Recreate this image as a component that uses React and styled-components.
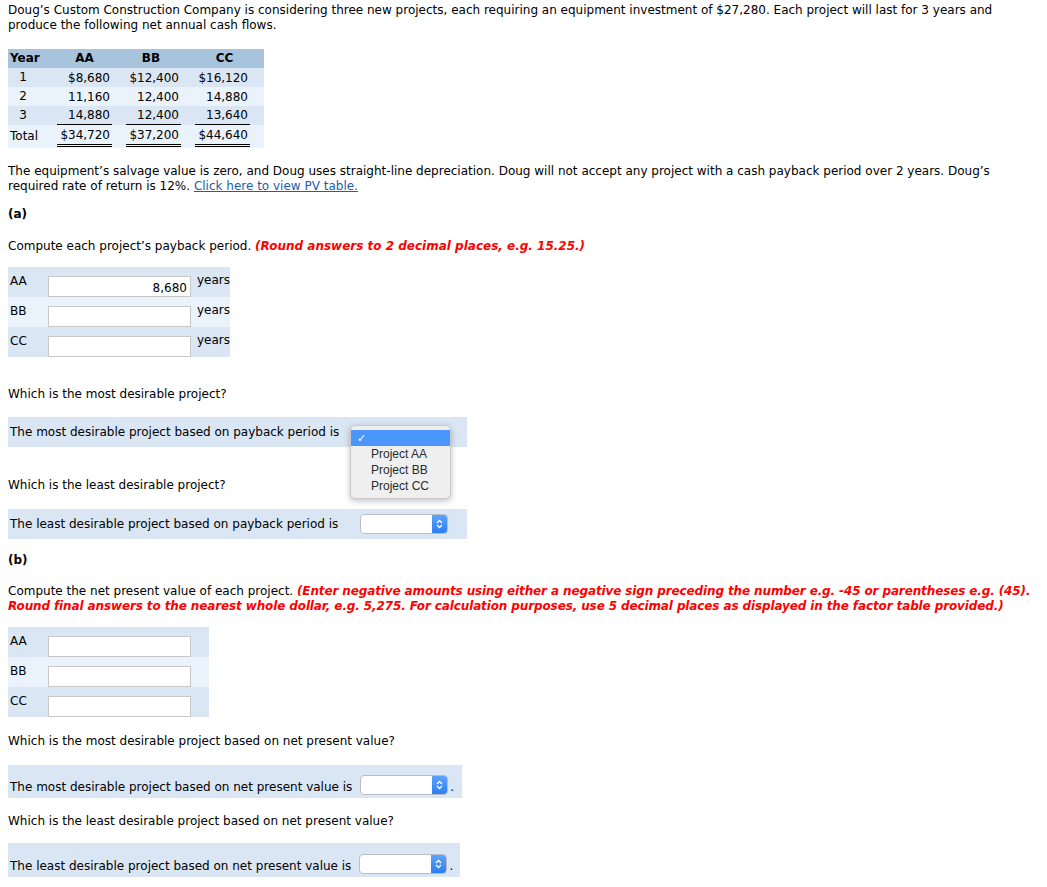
import styled, { createGlobalStyle } from 'styled-components'

const GlobalStyle = createGlobalStyle`
  body {
    margin: 3px 8px 8px;
    font-family: "DejaVu Sans", Verdana, sans-serif;
    font-size: 12px;
    color: #000;
    background: #fff;
  }
`

const Page = styled.div`
  position: relative;
  line-height: 15px;
`

const Para = styled.p`
  margin: ${p => p.mt || 0}px 0 0 0;
`

const Hint = styled.span`
  color: #f00;
  font-weight: bold;
  font-style: italic;
  letter-spacing: ${p => p.tight ? '-0.12px' : '0'};
`

const Link = styled.a`
  color: #1d5ea8;
  text-decoration: underline;
`

const Heading = styled.div`
  font-weight: bold;
  margin-top: ${p => p.mt || 0}px;
`

const FlowTable = styled.table`
  border-collapse: collapse;
  table-layout: fixed;
  width: 256px;
  margin-top: 16px;
  font-size: 12px;
  td, th { padding: 0; }
`

const HeadCell = styled.th`
  background: #a8c4dc;
  height: 19px;
  font-weight: bold;
  text-align: ${p => p.left ? 'left' : 'center'};
  padding: 0 0 0 ${p => p.pl || 0}px !important;
  width: ${p => p.w - (p.pl || 0)}px;
`

const Row = styled.tr`
  background: ${p => p.alt ? '#eaf2fc' : '#dae6f4'};
`

const YearCell = styled.td`
  text-align: ${p => p.left ? 'left' : 'center'};
  height: ${p => p.h || 19}px;
  padding: 0 ${p => p.left ? '0 0 2px' : '4px 0 0'} !important;
`

const NumCell = styled.td`
  text-align: right;
  padding-right: ${p => p.pr}px !important;
  height: ${p => p.h || 19}px;
`

const Num = styled.span`
  display: inline-block;
  box-sizing: border-box;
  width: 55px;
  padding-right: 2px;
  text-align: right;
  border-bottom: ${p => p.line === 'single' ? '1px solid #000' : p.line === 'double' ? '3px double #000' : 'none'};
  line-height: 18px;
`

const AnswerTable = styled.div`
  display: inline-flex;
  flex-direction: column;
  margin-top: 13px;
  width: ${p => p.w}px;
`

const AnswerRow = styled.div`
  display: flex;
  align-items: flex-start;
  height: 30px;
  background: ${p => p.alt ? '#eaf2fc' : '#dae6f4'};
`

const AnswerLabel = styled.div`
  width: 38px;
  padding: 7px 0 0 2px;
`

const TextInput = styled.input`
  box-sizing: border-box;
  width: 143px;
  height: 21px;
  margin-top: 9px;
  border: 1px solid #c8c8c8;
  background: #fff;
  text-align: right;
  font: inherit;
  padding: 2px 3px 0;
  color: #000;
  outline: none;
`

const Unit = styled.div`
  padding: 6px 0 0 6px;
`

const Band = styled.div`
  display: flex;
  align-items: ${p => p.bottom ? 'flex-end' : 'center'};
  width: ${p => p.w}px;
  height: ${p => p.h}px;
  background: #dae6f4;
  margin-top: ${p => p.mt}px;
  padding: ${p => p.bottom ? '0 0 3px 2px' : '0 0 0 2px'};
  box-sizing: border-box;
  position: relative;
`

const BandText = styled.span`
  margin-right: ${p => p.gap}px;
`

const SelectBox = styled.div`
  display: flex;
  width: 88px;
  height: 20px;
  box-sizing: border-box;
  border: 1px solid #b9bec6;
  border-radius: 4px;
  background: #fff;
  overflow: hidden;
`

const SelectBody = styled.div`
  flex: 1;
`

const SelectArrow = styled.div`
  width: 15px;
  background: linear-gradient(#5ca3fb, #2c7ef1);
  display: flex;
  align-items: center;
  justify-content: center;
`

const Dot = styled.span`
  margin-left: 2px;
`

const Popup = styled.div`
  position: absolute;
  left: 342px;
  top: 8px;
  width: 101px;
  height: 74px;
  background: #efefef;
  border: 1px solid #c9c9c9;
  border-radius: 5px;
  box-shadow: 0 2px 6px rgba(0, 0, 0, 0.25);
  font-family: "Liberation Sans", Arial, sans-serif;
  font-size: 12px;
  color: #2a2a2a;
  padding-top: 4px;
  box-sizing: border-box;
  z-index: 2;
`

const PopupItem = styled.div`
  height: 16px;
  line-height: 16px;
  padding-left: ${p => p.selected ? '6px' : '20px'};
  background: ${p => p.selected ? '#4a96fb' : 'transparent'};
  color: ${p => p.selected ? '#fff' : '#2a2a2a'};
  font-size: ${p => p.selected ? '11px' : '12px'};
`

const Arrows = () => (
  <svg width="9" height="12" viewBox="0 0 9 12">
    <path d="M2 5 L4.5 2.5 L7 5 M2 7 L4.5 9.5 L7 7" fill="none" stroke="#fff" strokeWidth="1.3" />
  </svg>
)

const Select = () => (
  <SelectBox>
    <SelectBody />
    <SelectArrow><Arrows /></SelectArrow>
  </SelectBox>
)

const flows = [
  { year: '1', aa: '$8,680', bb: '$12,400', cc: '$16,120' },
  { year: '2', aa: '11,160', bb: '12,400', cc: '14,880', alt: true },
  { year: '3', aa: '14,880', bb: '12,400', cc: '13,640', line: 'single' },
]

const CashTable = () => (
  <FlowTable>
    <thead>
      <tr>
        <HeadCell left w={34} pl={2}>Year</HeadCell>
        <HeadCell w={75} pl={10}>AA</HeadCell>
        <HeadCell w={68}>BB</HeadCell>
        <HeadCell w={79}>CC</HeadCell>
      </tr>
    </thead>
    <tbody>
      {flows.map(f => (
        <Row key={f.year} alt={f.alt}>
          <YearCell>{f.year}</YearCell>
          <NumCell pr={5}><Num line={f.line}>{f.aa}</Num></NumCell>
          <NumCell pr={4}><Num line={f.line}>{f.bb}</Num></NumCell>
          <NumCell pr={14}><Num line={f.line}>{f.cc}</Num></NumCell>
        </Row>
      ))}
      <Row alt>
        <YearCell left h={23}>Total</YearCell>
        <NumCell pr={5} h={23}><Num line="double">$34,720</Num></NumCell>
        <NumCell pr={4} h={23}><Num line="double">$37,200</Num></NumCell>
        <NumCell pr={14} h={23}><Num line="double">$44,640</Num></NumCell>
      </Row>
    </tbody>
  </FlowTable>
)

export default function App() {
  return (
    <Page>
      <GlobalStyle />
      <Para>
        Doug’s Custom Construction Company is considering three new projects, each requiring an equipment investment of $27,280. Each project will last for 3 years and produce the following net annual cash flows.
      </Para>
      <CashTable />
      <Para mt={16}>
        The equipment’s salvage value is zero, and Doug uses straight-line depreciation. Doug will not accept any project with a cash payback period over 2 years. Doug’s required rate of return is 12%. <Link href="#">Click here to view PV table.</Link>
      </Para>
      <Heading mt={13}>(a)</Heading>
      <Para mt={17}>
        Compute each project’s payback period. <Hint>(Round answers to 2 decimal places, e.g. 15.25.)</Hint>
      </Para>
      <div>
        <AnswerTable w={222}>
          <AnswerRow>
            <AnswerLabel>AA</AnswerLabel>
            <TextInput defaultValue="8,680" />
            <Unit>years</Unit>
          </AnswerRow>
          <AnswerRow alt>
            <AnswerLabel>BB</AnswerLabel>
            <TextInput />
            <Unit>years</Unit>
          </AnswerRow>
          <AnswerRow>
            <AnswerLabel>CC</AnswerLabel>
            <TextInput />
            <Unit>years</Unit>
          </AnswerRow>
        </AnswerTable>
      </div>
      <Para mt={30}>Which is the most desirable project?</Para>
      <Band w={459} h={30} mt={15}>
        <BandText gap={10}>The most desirable project based on payback period is</BandText>
        <Popup>
          <PopupItem selected>✓</PopupItem>
          <PopupItem>Project AA</PopupItem>
          <PopupItem>Project BB</PopupItem>
          <PopupItem>Project CC</PopupItem>
        </Popup>
      </Band>
      <Para mt={31}>Which is the least desirable project?</Para>
      <Band w={459} h={30} mt={16}>
        <BandText gap={22}>The least desirable project based on payback period is</BandText>
        <Select />
      </Band>
      <Heading mt={14}>(b)</Heading>
      <Para mt={16}>
        Compute the net present value of each project. <Hint tight>(Enter negative amounts using either a negative sign preceding the number e.g. -45 or parentheses e.g. (45). Round final answers to the nearest whole dollar, e.g. 5,275. For calculation purposes, use 5 decimal places as displayed in the factor table provided.)</Hint>
      </Para>
      <div>
        <AnswerTable w={201}>
          <AnswerRow>
            <AnswerLabel>AA</AnswerLabel>
            <TextInput />
          </AnswerRow>
          <AnswerRow alt>
            <AnswerLabel>BB</AnswerLabel>
            <TextInput />
          </AnswerRow>
          <AnswerRow>
            <AnswerLabel>CC</AnswerLabel>
            <TextInput />
          </AnswerRow>
        </AnswerTable>
      </div>
      <Para mt={17}>Which is the most desirable project based on net present value?</Para>
      <Band w={454} h={33} mt={16} bottom>
        <BandText gap={8}>The most desirable project based on net present value is</BandText>
        <Select />
        <Dot>.</Dot>
      </Band>
      <Para mt={16}>Which is the least desirable project based on net present value?</Para>
      <Band w={452} h={34} mt={14} bottom>
        <BandText gap={8}>The least desirable project based on net present value is</BandText>
        <Select />
        <Dot>.</Dot>
      </Band>
    </Page>
  )
}
